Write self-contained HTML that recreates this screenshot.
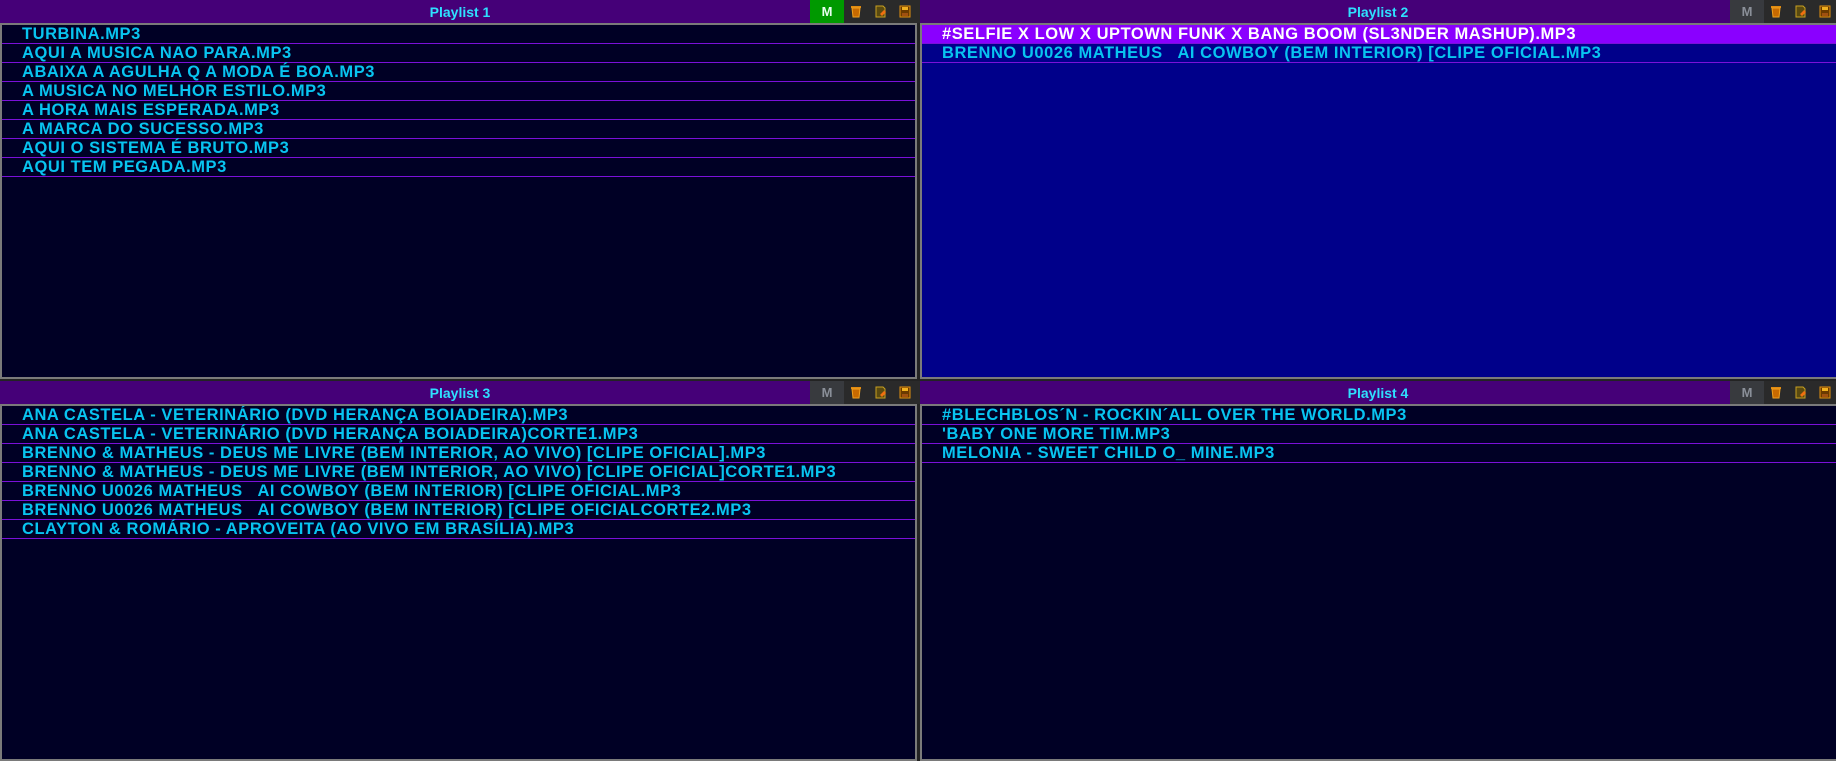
<!DOCTYPE html>
<html><head><meta charset="utf-8"><style>
*{margin:0;padding:0;box-sizing:border-box}
body{width:1836px;height:759px;background:#232323;position:relative;overflow:hidden;font-family:"Liberation Sans",sans-serif}
.hdr{position:absolute;height:23px;background:#450078;}
.hdr .t{position:absolute;left:0;top:0;height:23px;line-height:24px;text-align:center;color:#2ee0ff;font-weight:bold;font-size:14px}
.btns{position:absolute;top:0;height:23px;width:110px;background:#2a2a2a}
.m{position:absolute;left:0;top:0;width:34px;height:23px;background:#383a3e;color:#8a8f98;font-weight:bold;font-size:13px;text-align:center;line-height:24px}
.m.on{background:#009900;color:#e8fff0}
.ic{position:absolute;top:5px;width:12px;height:13px}
.list{position:absolute;border:2px solid #7a7a7a;background:#000025;overflow:hidden}
.list.blue{background:#00008a}
.row{height:19px;border-bottom:1px solid #7a10d8;color:#08c4f0;font-weight:bold;font-size:16.5px;letter-spacing:0.55px;line-height:19px;padding-left:20px;white-space:pre}
.row.sel{background:#8a00ff;color:#fff}
</style></head><body>

<!-- Panel 1 -->
<div class="hdr" style="left:0;top:0;width:810px"><div class="t" style="width:920px">Playlist 1</div></div>
<div class="btns" style="left:810px"><div class="m on">M</div>
<svg class="ic" style="left:40px" viewBox="0 0 12 13"><rect x="1" y="1" width="10" height="2" fill="#e08a10"/><path d="M2 3h8l-1 9H3z" fill="#c86a00" stroke="#f0a020" stroke-width="1"/></svg>
<svg class="ic" style="left:65px" viewBox="0 0 12 13"><path d="M1 1h7l2 2v9H1z" fill="#5a4a10" stroke="#c8a020"/><path d="M5 9l4-4 2 2-4 4z" fill="#f07010"/></svg>
<svg class="ic" style="left:89px" viewBox="0 0 12 13"><rect x="1" y="1" width="10" height="11" fill="#6a3a00" stroke="#e09010"/><rect x="3" y="2" width="6" height="3" fill="#f0b020"/><rect x="3" y="8" width="6" height="3" fill="#a05010"/></svg>
</div>
<div class="list" style="left:0;top:23px;width:917px;height:356px">
<div class="row">TURBINA.MP3</div><div class="row">AQUI A MUSICA NAO PARA.MP3</div><div class="row">ABAIXA A AGULHA Q A MODA É BOA.MP3</div><div class="row">A MUSICA NO MELHOR ESTILO.MP3</div><div class="row">A HORA MAIS ESPERADA.MP3</div><div class="row">A MARCA DO SUCESSO.MP3</div><div class="row">AQUI O SISTEMA É BRUTO.MP3</div><div class="row">AQUI TEM PEGADA.MP3</div>
</div>

<!-- Panel 2 -->
<div class="hdr" style="left:920px;top:0;width:810px"><div class="t" style="width:916px">Playlist 2</div></div>
<div class="btns" style="left:1730px;width:106px"><div class="m">M</div>
<svg class="ic" style="left:40px" viewBox="0 0 12 13"><rect x="1" y="1" width="10" height="2" fill="#e08a10"/><path d="M2 3h8l-1 9H3z" fill="#c86a00" stroke="#f0a020" stroke-width="1"/></svg>
<svg class="ic" style="left:65px" viewBox="0 0 12 13"><path d="M1 1h7l2 2v9H1z" fill="#5a4a10" stroke="#c8a020"/><path d="M5 9l4-4 2 2-4 4z" fill="#f07010"/></svg>
<svg class="ic" style="left:89px" viewBox="0 0 12 13"><rect x="1" y="1" width="10" height="11" fill="#6a3a00" stroke="#e09010"/><rect x="3" y="2" width="6" height="3" fill="#f0b020"/><rect x="3" y="8" width="6" height="3" fill="#a05010"/></svg>
</div>
<div class="list blue" style="left:920px;top:23px;width:918px;height:356px">
<div class="row sel">#SELFIE X LOW X UPTOWN FUNK X BANG BOOM (SL3NDER MASHUP).MP3</div><div class="row">BRENNO U0026 MATHEUS   AI COWBOY (BEM INTERIOR) [CLIPE OFICIAL.MP3</div>
</div>

<!-- Panel 3 -->
<div class="hdr" style="left:0;top:381px;width:810px"><div class="t" style="width:920px">Playlist 3</div></div>
<div class="btns" style="left:810px;top:381px"><div class="m">M</div>
<svg class="ic" style="left:40px" viewBox="0 0 12 13"><rect x="1" y="1" width="10" height="2" fill="#e08a10"/><path d="M2 3h8l-1 9H3z" fill="#c86a00" stroke="#f0a020" stroke-width="1"/></svg>
<svg class="ic" style="left:65px" viewBox="0 0 12 13"><path d="M1 1h7l2 2v9H1z" fill="#5a4a10" stroke="#c8a020"/><path d="M5 9l4-4 2 2-4 4z" fill="#f07010"/></svg>
<svg class="ic" style="left:89px" viewBox="0 0 12 13"><rect x="1" y="1" width="10" height="11" fill="#6a3a00" stroke="#e09010"/><rect x="3" y="2" width="6" height="3" fill="#f0b020"/><rect x="3" y="8" width="6" height="3" fill="#a05010"/></svg>
</div>
<div class="list" style="left:0;top:404px;width:917px;height:357px">
<div class="row">ANA CASTELA - VETERINÁRIO (DVD HERANÇA BOIADEIRA).MP3</div><div class="row">ANA CASTELA - VETERINÁRIO (DVD HERANÇA BOIADEIRA)CORTE1.MP3</div><div class="row">BRENNO &amp; MATHEUS - DEUS ME LIVRE (BEM INTERIOR, AO VIVO) [CLIPE OFICIAL].MP3</div><div class="row">BRENNO &amp; MATHEUS - DEUS ME LIVRE (BEM INTERIOR, AO VIVO) [CLIPE OFICIAL]CORTE1.MP3</div><div class="row">BRENNO U0026 MATHEUS   AI COWBOY (BEM INTERIOR) [CLIPE OFICIAL.MP3</div><div class="row">BRENNO U0026 MATHEUS   AI COWBOY (BEM INTERIOR) [CLIPE OFICIALCORTE2.MP3</div><div class="row">CLAYTON &amp; ROMÁRIO - APROVEITA (AO VIVO EM BRASÍLIA).MP3</div>
</div>

<!-- Panel 4 -->
<div class="hdr" style="left:920px;top:381px;width:810px"><div class="t" style="width:916px">Playlist 4</div></div>
<div class="btns" style="left:1730px;top:381px;width:106px"><div class="m">M</div>
<svg class="ic" style="left:40px" viewBox="0 0 12 13"><rect x="1" y="1" width="10" height="2" fill="#e08a10"/><path d="M2 3h8l-1 9H3z" fill="#c86a00" stroke="#f0a020" stroke-width="1"/></svg>
<svg class="ic" style="left:65px" viewBox="0 0 12 13"><path d="M1 1h7l2 2v9H1z" fill="#5a4a10" stroke="#c8a020"/><path d="M5 9l4-4 2 2-4 4z" fill="#f07010"/></svg>
<svg class="ic" style="left:89px" viewBox="0 0 12 13"><rect x="1" y="1" width="10" height="11" fill="#6a3a00" stroke="#e09010"/><rect x="3" y="2" width="6" height="3" fill="#f0b020"/><rect x="3" y="8" width="6" height="3" fill="#a05010"/></svg>
</div>
<div class="list" style="left:920px;top:404px;width:918px;height:357px">
<div class="row">#BLECHBLOS´N - ROCKIN´ALL OVER THE WORLD.MP3</div><div class="row">'BABY ONE MORE TIM.MP3</div><div class="row">MELONIA - SWEET CHILD O_ MINE.MP3</div>
</div>
</body></html>
